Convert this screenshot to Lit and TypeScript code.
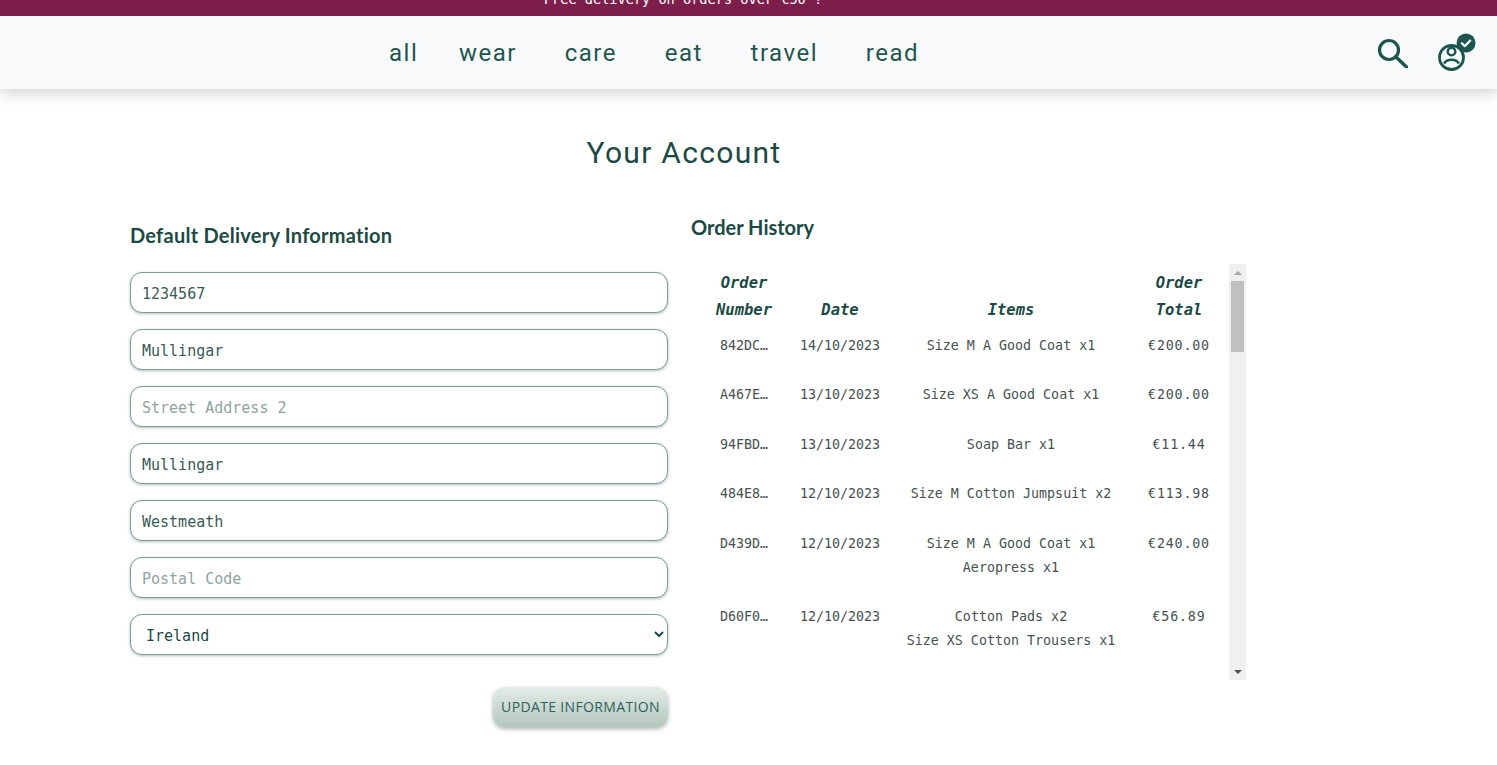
import { LitElement, html, css } from "lit";
import { customElement } from "lit/decorators.js";

const NAV = ["all", "wear", "care", "eat", "travel", "read"];

const ORDERS = [
  { id: "842DC…", date: "14/10/2023", items: ["Size M A Good Coat x1"], total: "€200.00" },
  { id: "A467E…", date: "13/10/2023", items: ["Size XS A Good Coat x1"], total: "€200.00" },
  { id: "94FBD…", date: "13/10/2023", items: ["Soap Bar x1"], total: "€11.44" },
  { id: "484E8…", date: "12/10/2023", items: ["Size M Cotton Jumpsuit x2"], total: "€113.98" },
  { id: "D439D…", date: "12/10/2023", items: ["Size M A Good Coat x1", "Aeropress x1"], total: "€240.00" },
  { id: "D60F0…", date: "12/10/2023", items: ["Cotton Pads x2", "Size XS Cotton Trousers x1"], total: "€56.89" },
];

@customElement("app-root")
export class AppRoot extends LitElement {
  static styles = css`
    :host {
      display: block;
      height: 765px;
      overflow: hidden;
      background: #fff;
      color: #1b4a44;
      font-family: "Lato", sans-serif;
    }
    .banner {
      height: 16px;
      background: #7e1e4c;
      color: #fff;
      overflow: hidden;
      display: flex;
      justify-content: center;
      align-items: flex-end;
      padding-right: 131px;
      font: 13.6px/16px "DejaVu Sans Mono", monospace;
    }
    .banner span {
      transform: translateY(-9px);
      white-space: nowrap;
    }
    .bar {
      height: 73px;
      background: #f8f9fa;
      box-shadow: 0 4px 14px rgba(0, 0, 0, 0.18);
      display: flex;
      align-items: center;
      padding-left: 389px;
      padding-right: 21px;
      position: relative;
    }
    .links {
      display: flex;
      gap: 47.75px;
      flex: 1;
      font: 400 24px/1 "Roboto", sans-serif;
      letter-spacing: 1.5px;
      color: #1f5650;
    }
    .links span:first-child {
      margin-right: -7px;
    }
    .icons {
      display: flex;
      align-items: center;
      gap: 30px;
      margin-top: -1px;
    }
    .icons svg {
      display: block;
    }
    main {
      width: 1366px;
      padding-left: 130px;
      box-sizing: border-box;
    }
    h1 {
      margin: 47px 0 0;
      padding-right: 128px;
      text-align: center;
      font: 400 30px/34px "Roboto", sans-serif;
      letter-spacing: 1.3px;
      color: #1b4a44;
    }
    .cols {
      display: flex;
      gap: 23px;
      align-items: flex-start;
      margin-top: 41px;
    }
    .form {
      width: 538px;
      display: flex;
      flex-direction: column;
      gap: 16px;
      padding-top: 12px;
    }
    h2 {
      margin: 0;
      font: 700 20px/24px "Lato", sans-serif;
      color: #1b4a44;
    }
    .form h2 {
      margin-bottom: 9px;
      letter-spacing: 0.25px;
    }
    .history h2 {
      margin-top: 4px;
    }
    .field {
      height: 41px;
      box-sizing: border-box;
      width: 100%;
      border: 1px solid #7b9c9a;
      border-radius: 12px;
      box-shadow: 0 1px 3px rgba(40, 70, 70, 0.35);
      background: #fff;
      padding: 2px 11px 0;
      font: 15px "DejaVu Sans Mono", monospace;
      color: #3a5a55;
      outline: none;
    }
    .field::placeholder {
      color: #8fa3a0;
      opacity: 1;
    }
    select.field {
      padding: 2px 0 0 11px;
      color: #1b4a44;
    }
    .actions {
      display: flex;
      justify-content: flex-end;
      margin-top: 16px;
    }
    button {
      width: 175px;
      height: 40px;
      border: 0;
      border-radius: 12px;
      background: linear-gradient(#e6ece8, #b2c6bc);
      box-shadow: 0 2px 4px rgba(40, 70, 60, 0.4);
      color: #2f625b;
      font: 14px "Open Sans", sans-serif;
      letter-spacing: 0.35px;
      padding: 0 0 2px;
    }
    .history {
      width: 555px;
    }
    .scroll {
      margin-top: 25px;
      height: 416px;
      display: flex;
    }
    .rows {
      flex: 1;
      overflow: hidden;
    }
    .scrollbar {
      width: 17px;
      background: #f0f0f0;
      display: flex;
      flex-direction: column;
      align-items: center;
    }
    .arrow {
      height: 17px;
      display: flex;
      align-items: center;
      justify-content: center;
    }
    .arrow.down {
      margin-top: auto;
    }
    .arrow i {
      border-left: 4px solid transparent;
      border-right: 4px solid transparent;
    }
    .arrow.up i {
      border-bottom: 4px solid #a3a3a3;
    }
    .arrow.down i {
      border-top: 4px solid #505050;
    }
    .thumb {
      width: 13px;
      height: 71px;
      background: #c0c0c0;
    }
    table {
      width: 528px;
      table-layout: fixed;
      border-collapse: collapse;
      font: 13.33px/24px "DejaVu Sans Mono", monospace;
      color: #47524f;
      text-align: center;
    }
    th {
      font: italic 700 15.5px/27px "DejaVu Sans Mono", monospace;
      color: #1b4a44;
      vertical-align: bottom;
      padding: 6px 0 0;
    }
    td {
      vertical-align: top;
      padding: 0 0 25.5px;
      white-space: nowrap;
    }
    tbody tr:first-child td {
      padding-top: 9.9px;
    }
    td.total {
      letter-spacing: 0.8px;
    }
  `;

  render() {
    return html`
      <div class="banner"><span>Free delivery on orders over €50 !</span></div>
      <header class="bar">
        <nav class="links">${NAV.map((n) => html`<span>${n}</span>`)}</nav>
        <div class="icons">
          <svg width="32" height="32" viewBox="0 0 32 32" fill="none" stroke="#1b554e" stroke-linecap="round">
            <circle cx="13" cy="14" r="9.500" stroke-width="3.200" />
            <path d="M20 21 30.500 31" stroke-width="3.400" />
          </svg>
          <svg width="38" height="38" viewBox="0 0 38 38" fill="none">
            <circle cx="13.500" cy="24.500" r="12" stroke="#1b554e" stroke-width="2.800" />
            <circle cx="13.500" cy="18.500" r="3.800" stroke="#1b554e" stroke-width="2.500" />
            <path d="M6 30.500c1.800-2.800 4.500-3.800 7.500-3.800s5.700 1 7.500 3.800" stroke="#1b554e" stroke-width="2.500" />
            <circle cx="28" cy="10" r="9.500" fill="#1b554e" />
            <path d="M23.800 10.200l3 3 5.400-5.600" stroke="#fff" stroke-width="2.200" stroke-linecap="round" stroke-linejoin="round" />
          </svg>
        </div>
      </header>
      <main>
        <h1>Your Account</h1>
        <div class="cols">
          <section class="form">
            <h2>Default Delivery Information</h2>
            <input class="field" placeholder="Phone Number" .value=${"1234567"} />
            <input class="field" placeholder="Street Address 1" .value=${"Mullingar"} />
            <input class="field" placeholder="Street Address 2" />
            <input class="field" placeholder="Town or City" .value=${"Mullingar"} />
            <input class="field" placeholder="County" .value=${"Westmeath"} />
            <input class="field" placeholder="Postal Code" />
            <select class="field"><option>Ireland</option></select>
            <div class="actions"><button>UPDATE INFORMATION</button></div>
          </section>
          <section class="history">
            <h2>Order History</h2>
            <div class="scroll">
              <div class="rows">
                <table>
                  <colgroup>
                    <col style="width:106px" />
                    <col style="width:86px" />
                    <col style="width:256px" />
                    <col style="width:80px" />
                  </colgroup>
                  <thead>
                    <tr>
                      <th>Order<br />Number</th>
                      <th>Date</th>
                      <th>Items</th>
                      <th>Order<br />Total</th>
                    </tr>
                  </thead>
                  <tbody>
                    ${ORDERS.map(
                      (o) => html`<tr>
                        <td>${o.id}</td>
                        <td>${o.date}</td>
                        <td>${o.items.map((i) => html`<div>${i}</div>`)}</td>
                        <td class="total">${o.total}</td>
                      </tr>`
                    )}
                  </tbody>
                </table>
              </div>
              <div class="scrollbar">
                <div class="arrow up"><i></i></div>
                <div class="thumb"></div>
                <div class="arrow down"><i></i></div>
              </div>
            </div>
          </section>
        </div>
      </main>
    `;
  }
}
